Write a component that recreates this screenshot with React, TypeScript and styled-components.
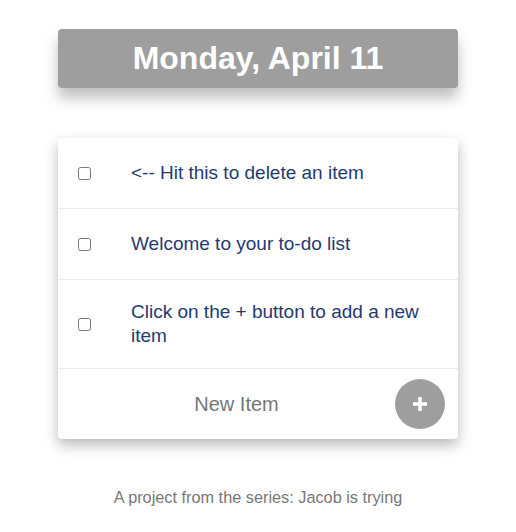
import React, { useState } from "react";
import styled, { createGlobalStyle } from "styled-components";

const GlobalStyle = createGlobalStyle`
    * {
        box-sizing: border-box;
    }

    body {
        margin: 0;
        background: #ffffff;
        font-family: "Liberation Sans", Arial, Helvetica, sans-serif;
    }
`;

type Item = { id: number; text: string };

const initialItems: Item[] = [
    { id: 1, text: "<-- Hit this to delete an item" },
    { id: 2, text: "Welcome to your to-do list" },
    { id: 3, text: "Click on the + button to add a new item" },
];

const App = () => {
    const [items, setItems] = useState<Item[]>(initialItems);
    const [draft, setDraft] = useState("");

    const addItem = () => {
        if (!draft.trim()) return;
        setItems([...items, { id: Date.now(), text: draft }]);
        setDraft("");
    };

    return (
        <Page>
            <GlobalStyle />
            <Header>Monday, April 11</Header>
            <Card>
                {items.map((item) => (
                    <Row key={item.id}>
                        <Check
                            type="checkbox"
                            onChange={() => setItems(items.filter((i) => i.id !== item.id))}
                        />
                        <ItemText>{item.text}</ItemText>
                    </Row>
                ))}
                <Footer>
                    <NewInput
                        placeholder="New Item"
                        value={draft}
                        onChange={(e) => setDraft(e.target.value)}
                    />
                    <AddButton onClick={addItem} aria-label="Add item">
                        <svg width="14" height="14" viewBox="0 0 14 14">
                            <path d="M7 0v14M0 7h14" stroke="#fff" strokeWidth="3.4" />
                        </svg>
                    </AddButton>
                </Footer>
            </Card>
            <Credit>A project from the series: Jacob is trying</Credit>
        </Page>
    );
};

export default App;

const Page = styled.div`
    display: flex;
    flex-direction: column;
    align-items: center;
    padding-top: 29px;
`;

const Header = styled.h1`
    width: 400px;
    height: 59px;
    margin: 0;
    display: flex;
    align-items: center;
    justify-content: center;
    background: #9e9e9e;
    border-radius: 4px;
    color: #ffffff;
    font-size: 32px;
    font-weight: 700;
    box-shadow: 0 10px 14px rgba(0, 0, 0, 0.25);
`;

const Card = styled.div`
    width: 400px;
    margin-top: 50px;
    background: #ffffff;
    border-radius: 4px;
    box-shadow: 0 6px 14px rgba(0, 0, 0, 0.28);
    overflow: hidden;
`;

const Row = styled.div`
    display: flex;
    align-items: center;
    min-height: 71px;
    padding: 20px;
    border-bottom: 1px solid #ececec;
`;

const Check = styled.input`
    width: 13px;
    height: 13px;
    margin: 1px 40px 0 0;
    flex-shrink: 0;
`;

const ItemText = styled.div`
    flex: 1;
    color: #243a70;
    font-size: 19px;
    line-height: 24px;
    font-weight: 300;
`;

const Footer = styled.div`
    display: flex;
    align-items: center;
    height: 70px;
    padding: 0 13px 0 20px;
`;

const NewInput = styled.input`
    flex: 1;
    min-width: 0;
    border: none;
    outline: none;
    background: transparent;
    text-align: center;
    font-family: "Liberation Sans", Arial, sans-serif;
    font-size: 20px;
    color: #333;

    &::placeholder {
        color: #777777;
        opacity: 1;
    }
`;

const AddButton = styled.button`
    width: 50px;
    height: 50px;
    flex-shrink: 0;
    border: none;
    border-radius: 50%;
    background: #9e9e9e;
    display: flex;
    align-items: center;
    justify-content: center;
    padding: 0;
    cursor: pointer;
`;

const Credit = styled.p`
    margin: 49px 0 0;
    color: #777777;
    font-size: 16.3px;
`;
